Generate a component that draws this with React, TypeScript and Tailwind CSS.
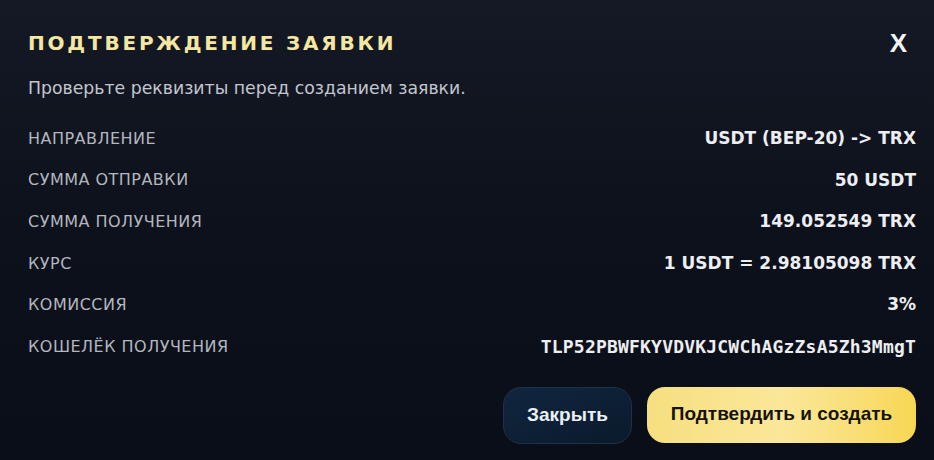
const rows: { label: string; value: string; mono?: boolean }[] = [
  { label: "Направление", value: "USDT (BEP-20) -> TRX" },
  { label: "Сумма отправки", value: "50 USDT" },
  { label: "Сумма получения", value: "149.052549 TRX" },
  { label: "Курс", value: "1 USDT = 2.98105098 TRX" },
  { label: "Комиссия", value: "3%" },
  { label: "Кошелёк получения", value: "TLP52PBWFKYVDVKJCWChAGzZsA5Zh3MmgT", mono: true },
];

export default function App() {
  return (
    <div className="flex h-[460px] w-full flex-col bg-gradient-to-b from-[#151925] via-[#0d111b] to-[#0a0e18] pl-[28px] pr-[18px] font-['DejaVu_Sans',sans-serif]">
      <header className="flex items-center justify-between pt-[29px]">
        <h2 className="text-[20px] font-bold uppercase leading-[28px] tracking-[0.14em] text-[#f3e7a2]">
          Подтверждение заявки
        </h2>
        <button
          type="button"
          className="mr-[9px] font-['Liberation_Sans',sans-serif] text-[26px] font-bold leading-none text-[#f1f2f4]"
        >
          X
        </button>
      </header>

      <p className="mt-[19px] text-[17.3px] leading-[25px] text-[#c2c6ce]">
        Проверьте реквизиты перед созданием заявки.
      </p>

      <dl className="mt-[17px] flex flex-col">
        {rows.map((row) => (
          <div key={row.label} className="flex h-[41.6px] items-center justify-between">
            <dt className="text-[16px] uppercase tracking-[0.03em] text-[#b3b7bf]">{row.label}</dt>
            <dd
              className={
                row.mono
                  ? "font-['DejaVu_Sans_Mono',monospace] text-[18px] font-bold tracking-[0.2px] text-[#eceef2]"
                  : "text-[17px] font-bold text-[#eceef2]"
              }
            >
              {row.value}
            </dd>
          </div>
        ))}
      </dl>

      <div className="mt-[19px] flex justify-end gap-[15px] font-['Liberation_Sans',sans-serif]">
        <button
          type="button"
          className="h-[57px] w-[129px] rounded-[18px] border border-[#1d3149] bg-gradient-to-br from-[#10263f] to-[#0b1a2c] text-[19px] font-bold text-[#eaf0f7]"
        >
          Закрыть
        </button>
        <button
          type="button"
          className="h-[56px] w-[269px] rounded-[18px] bg-gradient-to-r from-[#f6df80] via-[#fbe79a] to-[#f7d753] text-[19px] font-bold text-[#15130c]"
        >
          Подтвердить и создать
        </button>
      </div>
    </div>
  );
}
